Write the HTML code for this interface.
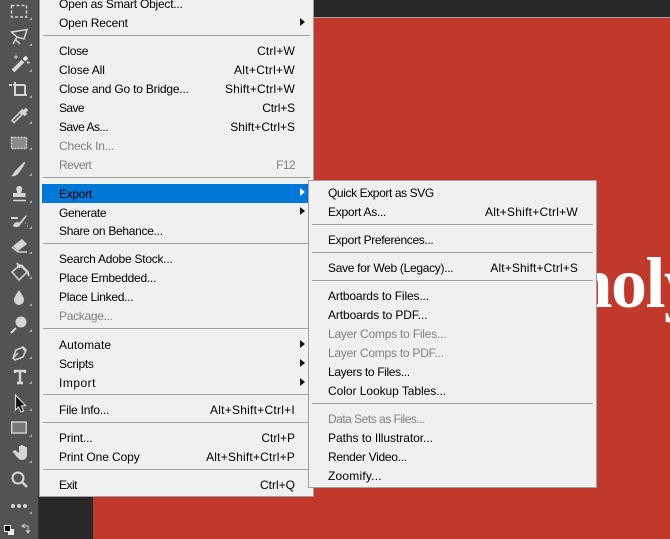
<!DOCTYPE html>
<html><head><meta charset="utf-8"><style>
html,body{margin:0;padding:0;background:#282828}
#r{position:relative;width:670px;height:539px;overflow:hidden;background:#282828;font:12px/16px "Liberation Sans",sans-serif;color:#000}
.a{position:absolute}
.t{position:absolute;white-space:nowrap}
.k{position:absolute;white-space:nowrap;text-align:right}
.d{color:#808080}
.s{position:absolute;height:1px;background:#a0a0a0}
.ar{position:absolute;width:0;height:0;border-left:5px solid #111;border-top:4px solid transparent;border-bottom:4px solid transparent}
</style></head><body><div id="r">
<div class="a" style="left:93px;top:17px;width:577px;height:522px;background:#c0392b;border-top:1px solid #a8a8a8"></div>
<div class="a" style="left:572.5px;top:243px;font:bold 72px/80px 'Liberation Serif',serif;letter-spacing:-1.5px;color:#fff;white-space:nowrap">noly</div>
<div class="a" style="left:0;top:0;width:39px;height:539px;background:#535353;border-right:0"></div>
<div class="a" style="left:38px;top:0;width:1px;height:539px;background:#383838"></div>
<svg class="a" style="left:0;top:0" width="39" height="539" fill="none" stroke="#d6d6d6" stroke-width="2">
<rect x="11.5" y="5.5" width="15" height="11.5" stroke-width="1.5" stroke-dasharray="3 2"/>
<path d="M11.5 32L27 29.5 24 39 17 37zM17 37l-4 7M15 39l5 5" stroke-width="1.5"/>
<path d="M13 71l10-10" stroke-width="4"/><path d="M24 60l3-3" stroke-width="4" stroke="#eee"/><path d="M16 55v4M14 57h4M28 61v3M27 62.500h3" stroke-width="1"/>
<path d="M9 85h3M13 85h12M15 82v13h12M25 85v11" stroke-width="2"/>
<path d="M12.500 122l9-9" stroke-width="4.500"/><path d="M13.500 121l7-7" stroke="#535353" stroke-width="1.500"/><path d="M21 110l5 5M24 112l3-3" stroke-width="3.500"/>
<rect x="11.500" y="137.500" width="15" height="11" fill="#8a8a8a" stroke-width="1.500" stroke-dasharray="2 1"/>
<path d="M11 176c2-1 3-4 5-6l8-8 1 0c0 2-1 3-2 5l-5 7c-2 2-5 3-7 2z" fill="#d6d6d6" stroke="none"/>
<path d="M19.500 186a3 3 0 0 1 2 5l0 2h4v4H13v-4h4v-2a3 3 0 0 1 2.500-5z" fill="#d6d6d6" stroke="none"/><path d="M13 200.500h13" stroke-width="1.500"/>
<path d="M13 226c1-4 5-5 6-3l7-8 1 1-7 9c0 2-5 3-7 1z" fill="#d6d6d6" stroke="none"/><path d="M11 218h7M25 223h.500M27 226h.500" stroke-width="2"/>
<path d="M13 246l9-7 5 5-9 7z" fill="#d6d6d6" stroke="none"/><path d="M12 247l6 5h9" stroke-width="1.500"/>
<path d="M12 272l8-7 7 7-8 8z" stroke-width="1.500"/><path d="M17 263l3 5M21 265l7 7c0 2 1 4 1 4" stroke-width="2"/>
<path d="M19 290c-3 5-5 7-5 10a5 5 0 0 0 10 0c0-3-2-5-5-10z" fill="#d6d6d6" stroke="none"/>
<circle cx="21" cy="322" r="5.500" fill="#d6d6d6" stroke="none"/><path d="M16 328l-5 5" stroke-width="2"/>
<path d="M13 358l3-8 7-3 3 3-3 7-8 3zM22 347l4 5M13 358l5-5" stroke-width="1.500"/>
<path d="M15 373v-2h10v2M20 371v12M17 383h6" stroke-width="2.400"/>
<path d="M15.500 395v15l3-3 2.500 5 2.500-1-2-5 4-.5z" fill="#111" stroke="#d6d6d6" stroke-width="1.200"/>
<rect x="11.700" y="422" width="14.500" height="11" fill="#777" stroke-width="1.400"/>
<path d="M12 452l2 1 2 3c2 2 3 4 6 4 3 0 5-2 5-5v-8h-2v-1h-2v-1h-2v1h-2v7l-4-3z" fill="#d6d6d6" stroke="none"/>
<circle cx="18" cy="478" r="5.500"/><path d="M22 482l5 5" stroke-width="2.400"/>
<circle cx="13" cy="506" r="2" fill="#d6d6d6" stroke="none"/><circle cx="19" cy="506" r="2" fill="#d6d6d6" stroke="none"/><circle cx="25" cy="506" r="2" fill="#d6d6d6" stroke="none"/>
<rect x="8" y="529" width="6" height="6" fill="#eee" stroke="none"/><rect x="4.500" y="525.500" width="6" height="6" fill="#000" stroke="#eee" stroke-width="1"/>
<path d="M23 526h5v7M25 524l-3 2 3 2M26 530l2 3 2-3" stroke-width="1"/>
</svg>
<svg class="a" style="left:0;top:0" width="39" height="539" fill="#a8a8a8">
<path d="M32 17v3h-3zM32 43v3h-3zM32 69v3h-3zM32 95v3h-3zM32 121v3h-3zM32 147v3h-3zM32 173v3h-3zM32 200v3h-3zM32 226v3h-3zM32 251v3h-3zM32 276v3h-3zM32 303v3h-3zM32 329v3h-3zM32 356v3h-3zM32 381v3h-3zM32 408v3h-3zM32 434v3h-3zM32 460v3h-3zM32 511v3h-3z"/>
</svg>
<div class="a" style="left:39px;top:-2px;width:273px;height:498px;background:#f0f0f0;border:solid #a0a0a0;border-width:0 1px 1px 1px;box-sizing:content-box"></div>
<div class="a" style="left:42px;top:184px;width:268px;height:19px;background:#0078d7"></div>
<div class="t" style="left:59px;top:-4px;letter-spacing:-.22px">Open as Smart Object...</div>
<div class="t" style="left:59px;top:15px;letter-spacing:-.18px">Open Recent</div>
<div class="t" style="left:59px;top:43px;letter-spacing:-.3px">Close</div>
<div class="t" style="left:59px;top:62px;letter-spacing:-.1px">Close All</div>
<div class="t" style="left:59px;top:81px;letter-spacing:-.2px">Close and Go to Bridge...</div>
<div class="t" style="left:59px;top:100px;letter-spacing:-.6px">Save</div>
<div class="t" style="left:59px;top:119px;letter-spacing:-.5px">Save As...</div>
<div class="t d" style="left:59px;top:138px;letter-spacing:-.2px">Check In...</div>
<div class="t d" style="left:59px;top:157px;letter-spacing:-.5px">Revert</div>
<div class="t" style="left:59px;top:186px;letter-spacing:-.3px">Export</div>
<div class="t" style="left:59px;top:205px;letter-spacing:-.35px">Generate</div>
<div class="t" style="left:59px;top:223px;letter-spacing:-.3px">Share on Behance...</div>
<div class="t" style="left:59px;top:251px;letter-spacing:-.25px">Search Adobe Stock...</div>
<div class="t" style="left:59px;top:270px;letter-spacing:-.25px">Place Embedded...</div>
<div class="t" style="left:59px;top:289px;letter-spacing:-.3px">Place Linked...</div>
<div class="t d" style="left:59px;top:308px;letter-spacing:-.3px">Package...</div>
<div class="t" style="left:59px;top:337px;letter-spacing:.1px">Automate</div>
<div class="t" style="left:59px;top:356px;letter-spacing:-.3px">Scripts</div>
<div class="t" style="left:59px;top:375px;letter-spacing:.5px">Import</div>
<div class="t" style="left:59px;top:402px;letter-spacing:-.2px">File Info...</div>
<div class="t" style="left:59px;top:430px;letter-spacing:-.15px">Print...</div>
<div class="t" style="left:59px;top:449px;letter-spacing:-.1px">Print One Copy</div>
<div class="t" style="left:59px;top:477px;letter-spacing:-.5px">Exit</div>
<div class="k" style="right:375px;top:43px;letter-spacing:.15px">Ctrl+W</div>
<div class="k" style="right:375px;top:62px;letter-spacing:.3px">Alt+Ctrl+W</div>
<div class="k" style="right:375px;top:81px;letter-spacing:.17px">Shift+Ctrl+W</div>
<div class="k" style="right:375px;top:100px;letter-spacing:-.15px">Ctrl+S</div>
<div class="k" style="right:375px;top:119px">Shift+Ctrl+S</div>
<div class="k d" style="right:375px;top:157px;letter-spacing:-.6px">F12</div>
<div class="k" style="right:375px;top:402px;letter-spacing:.25px">Alt+Shift+Ctrl+I</div>
<div class="k" style="right:375px;top:430px">Ctrl+P</div>
<div class="k" style="right:375px;top:449px;letter-spacing:.2px">Alt+Shift+Ctrl+P</div>
<div class="k" style="right:375px;top:477px">Ctrl+Q</div>
<div class="ar" style="left:300px;top:18px"></div>
<div class="ar" style="left:300px;top:188px;border-left-color:#fff"></div>
<div class="ar" style="left:300px;top:207px"></div>
<div class="ar" style="left:300px;top:340px"></div>
<div class="ar" style="left:300px;top:359px"></div>
<div class="ar" style="left:300px;top:378px"></div>
<div class="s" style="left:43px;top:35px;width:267px"></div>
<div class="s" style="left:43px;top:177px;width:267px"></div>
<div class="s" style="left:43px;top:243px;width:267px"></div>
<div class="s" style="left:43px;top:328px;width:267px"></div>
<div class="s" style="left:43px;top:394px;width:267px"></div>
<div class="s" style="left:43px;top:422px;width:267px"></div>
<div class="s" style="left:43px;top:469px;width:267px"></div>
<div class="a" style="left:308px;top:180px;width:287px;height:306px;background:#f0f0f0;border:1px solid #a0a0a0"></div>
<div class="t" style="left:328px;top:185px;letter-spacing:-.4px">Quick Export as SVG</div>
<div class="t" style="left:328px;top:204px;letter-spacing:-.27px">Export As...</div>
<div class="t" style="left:328px;top:232px;letter-spacing:-.35px">Export Preferences...</div>
<div class="t" style="left:328px;top:260px;letter-spacing:-.3px">Save for Web (Legacy)...</div>
<div class="t" style="left:328px;top:288px;letter-spacing:-.15px">Artboards to Files...</div>
<div class="t" style="left:328px;top:307px;letter-spacing:-.1px">Artboards to PDF...</div>
<div class="t d" style="left:328px;top:326px;letter-spacing:-.22px">Layer Comps to Files...</div>
<div class="t d" style="left:328px;top:345px;letter-spacing:-.24px">Layer Comps to PDF...</div>
<div class="t" style="left:328px;top:364px;letter-spacing:-.35px">Layers to Files...</div>
<div class="t" style="left:328px;top:383px;letter-spacing:-.05px">Color Lookup Tables...</div>
<div class="t d" style="left:328px;top:411px;letter-spacing:-.5px">Data Sets as Files...</div>
<div class="t" style="left:328px;top:430px;letter-spacing:-.05px">Paths to Illustrator...</div>
<div class="t" style="left:328px;top:449px;letter-spacing:-.3px">Render Video...</div>
<div class="t" style="left:328px;top:468px;letter-spacing:.2px">Zoomify...</div>
<div class="k" style="right:92px;top:204px;letter-spacing:.25px">Alt+Shift+Ctrl+W</div>
<div class="k" style="right:92px;top:260px;letter-spacing:.12px">Alt+Shift+Ctrl+S</div>
<div class="s" style="left:312px;top:224px;width:281px"></div>
<div class="s" style="left:312px;top:252px;width:281px"></div>
<div class="s" style="left:312px;top:280px;width:281px"></div>
<div class="s" style="left:312px;top:403px;width:281px"></div>
</div></body></html>
